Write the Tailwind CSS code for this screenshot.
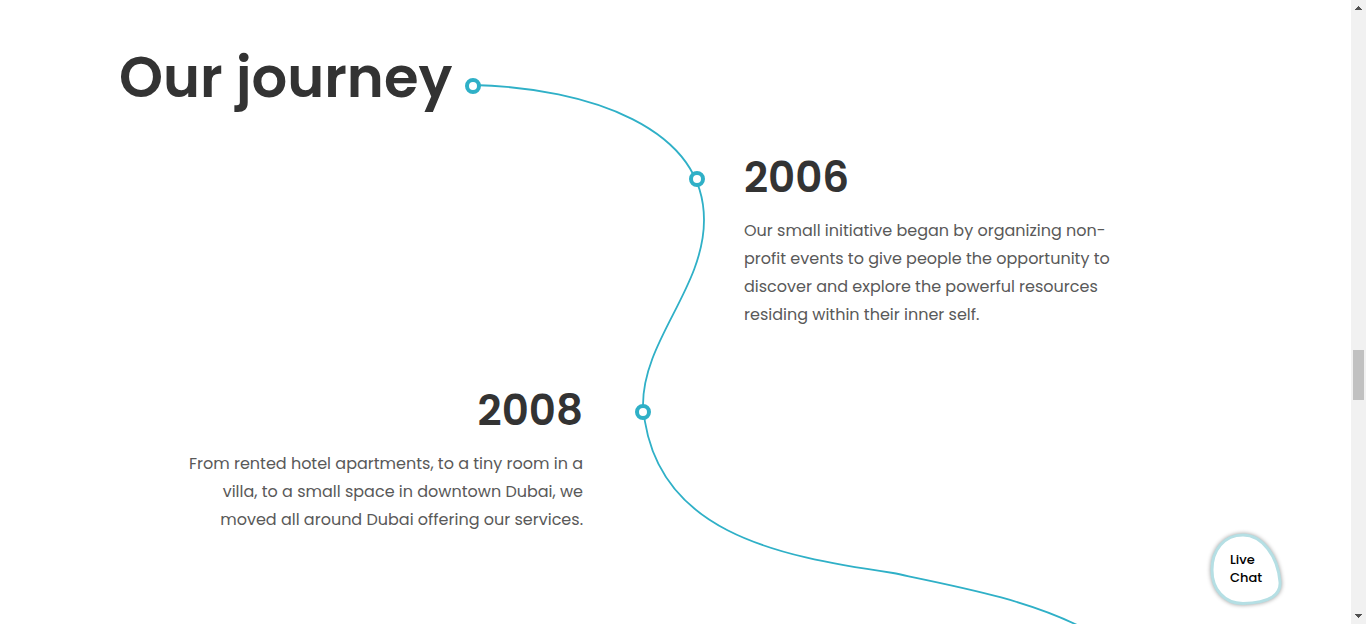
<!DOCTYPE html>
<html lang="en">
<head>
<meta charset="utf-8">
<meta name="viewport" content="width=device-width, initial-scale=1">
<title>Our journey</title>
<script src="https://cdn.jsdelivr.net/npm/@tailwindcss/browser@4"></script>
</head>
<body class="bg-white font-['Poppins','Inter',sans-serif] text-[#595959]">
<div class="flex h-screen overflow-hidden">
  <main class="relative min-w-0 flex-1 overflow-hidden">
    <svg class="absolute top-0 left-0 w-full" viewBox="0 0 1351 624" fill="none" stroke="#2fb0c7" aria-hidden="true">
      <path stroke-width="1.8" d="M473 85C590 88 704 128 704 220C704 288 643 340 643 405C652 532 776 556 893 573C960 587 1030 600 1085 629"/>
      <g fill="#fff" stroke-width="4">
        <circle cx="473" cy="86" r="6"/>
        <circle cx="697" cy="179" r="6"/>
        <circle cx="643" cy="412" r="6"/>
      </g>
    </svg>
    <section class="relative pt-[43px] pl-[119px]">
      <h1 class="text-[56px] leading-[70px] font-semibold whitespace-nowrap text-[#333333]">Our journey</h1>
      <div class="grid grid-cols-2">
        <article class="col-start-2 pt-10 pl-[9px]">
          <h2 class="text-[42px] leading-[50px] font-semibold text-[#333333]">2006</h2>
          <p class="mt-3.5 text-base leading-7 whitespace-nowrap">Our small initiative began by organizing non-<br>profit events to give people the opportunity to<br>discover and explore the powerful resources<br>residing within their inner self.</p>
        </article>
      </div>
      <article class="mt-[57px] w-[464px] text-right">
        <h2 class="text-[42px] leading-[50px] font-semibold text-[#333333]">2008</h2>
        <p class="mt-3.5 text-base leading-7 whitespace-nowrap">From rented hotel apartments, to a tiny room in a<br>villa, to a small space in downtown Dubai, we<br>moved all around Dubai offering our services.</p>
      </article>
    </section>
    <button type="button" class="absolute right-[69px] bottom-[19px] size-[72px] pl-5 text-left text-[13px] leading-[18px] font-medium text-black">
      <svg class="absolute inset-0 size-full overflow-visible drop-shadow-[0_0_2px_#0006]" viewBox="0 0 72 72" fill="#fff" stroke="#b5dfe4" stroke-width="3" aria-hidden="true"><path d="M33 2C52 2 68 23 70 49C71 61 61 70 33 70.500C14 70.500 2 56 2 37C2 17 14 2 33 2Z"/></svg>
      <span class="relative">Live<br>Chat</span>
    </button>
  </main>
  <div class="flex w-[15px] shrink-0 flex-col items-center justify-between bg-[#f1f1f1] py-[6px]" aria-hidden="true">
    <svg class="h-1 w-[7px]" viewBox="0 0 7 4" fill="#505050"><path d="M3 0h1v1h1v1h1v1h1v1H0V3h1V2h1V1h1z"/></svg>
    <div class="mt-[340px] mb-auto h-[50px] w-[11px] bg-[#c1c1c1]"></div>
    <svg class="h-1 w-[7px]" viewBox="0 0 7 4" fill="#505050"><path d="M0 0h7v1H6v1H5v1H4v1H3V3H2V2H1V1H0z"/></svg>
  </div>
</div>
</body>
</html>
